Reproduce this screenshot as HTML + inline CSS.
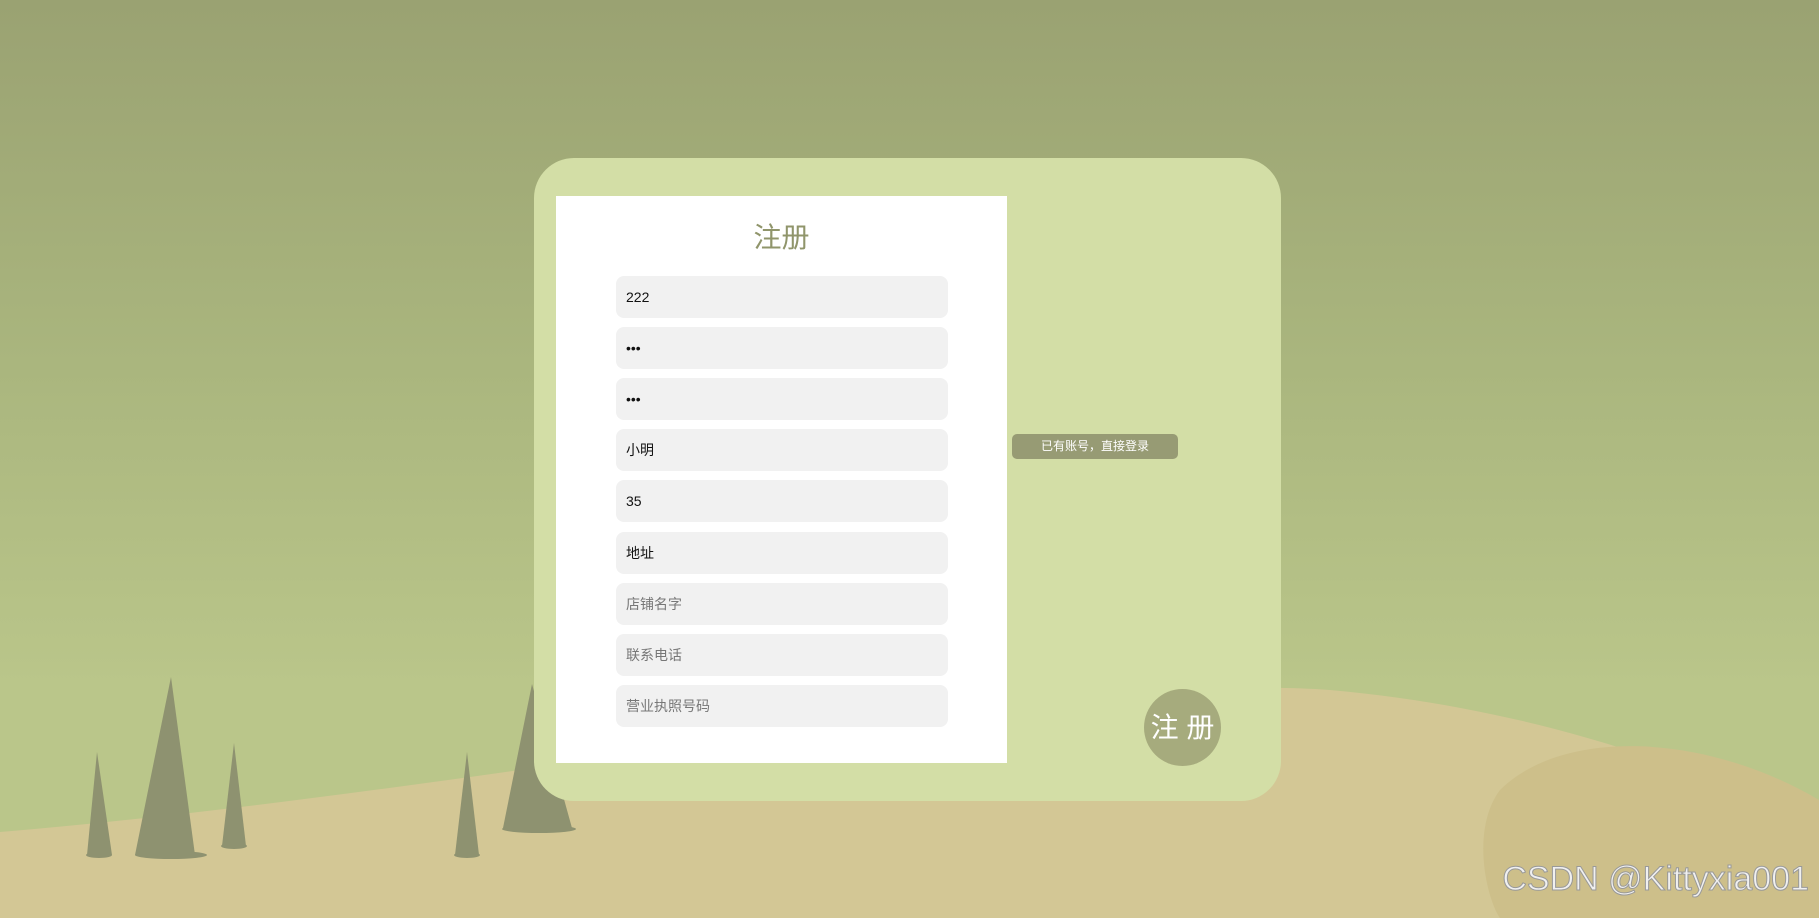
<!DOCTYPE html>
<html><head><meta charset="utf-8"><style>
html,body{margin:0;padding:0;width:1819px;height:918px;overflow:hidden;font-family:"Liberation Sans","Noto Sans CJK SC",sans-serif;}
body{background:linear-gradient(#9aa272 0%,#aab67e 40%,#bac68a 75%,#bac68a 100%);position:relative;}
svg.bg{position:absolute;left:0;top:0}
.card{position:absolute;left:534px;top:158px;width:747px;height:643px;background:#d3dea6;border-radius:40px;}
.panel{position:absolute;left:556px;top:196px;width:451px;height:567px;background:#fff;}
.title{position:absolute;left:556px;width:451px;top:216px;text-align:center;font-size:28px;color:#90956b;}
.in{position:absolute;left:616px;width:332px;height:42px;background:#f1f1f1;border-radius:8px;font-size:14px;line-height:42px;padding-left:10px;box-sizing:border-box;color:#111;}
.ph{color:#777;}
.login{position:absolute;left:1012px;top:434px;width:166px;height:25px;background:#979b74;border-radius:5px;color:#fff;font-size:12px;text-align:center;line-height:25px;}
.circ{position:absolute;left:1144px;top:689px;width:77px;height:77px;border-radius:50%;background:#a6ab7d;color:#fff;font-size:28px;text-align:center;line-height:77px;}
.wm{position:absolute;right:10px;top:860px;font-size:34px;color:#f0f0f0;-webkit-text-stroke:1px #999;}
</style></head><body>
<svg class="bg" width="1819" height="918">
<path d="M0,832 C500,790 1050,670 1330,690 C1560,710 1760,790 1819,840 L1819,918 L0,918 Z" fill="#d3c795"/>
<path d="M1819,800 C1700,730 1560,730 1500,790 C1470,830 1487,900 1500,918 L1819,918 Z" fill="#cdbf8a"/>
<g fill="#8e9270">
<path d="M97,752 L87,855 L112,855 Z"/><ellipse cx="99" cy="855" rx="13" ry="3"/>
<path d="M171,677 L135,855 L195,855 Z"/><ellipse cx="171" cy="855" rx="36" ry="4"/>
<path d="M234,743 L222,846 L246,846 Z"/><ellipse cx="234" cy="846" rx="13" ry="3"/>
<path d="M467,752 L455,855 L479,855 Z"/><ellipse cx="467" cy="855" rx="13" ry="3"/>
<path d="M532,684 L503,828 L572,828 Z"/><ellipse cx="539" cy="829" rx="37" ry="4"/>
</g>
</svg>
<div class="card"></div>
<div class="panel"></div>
<div class="title">注册</div>
<div class="in" style="top:276px">222</div>
<div class="in" style="top:327px">•••</div>
<div class="in" style="top:378px">•••</div>
<div class="in" style="top:429px">小明</div>
<div class="in" style="top:480px">35</div>
<div class="in" style="top:532px">地址</div>
<div class="in ph" style="top:583px">店铺名字</div>
<div class="in ph" style="top:634px">联系电话</div>
<div class="in ph" style="top:685px">营业执照号码</div>
<div class="login">已有账号，直接登录</div>
<div class="circ">注 册</div>
<div class="wm">CSDN @Kittyxia001</div>
</body></html>
